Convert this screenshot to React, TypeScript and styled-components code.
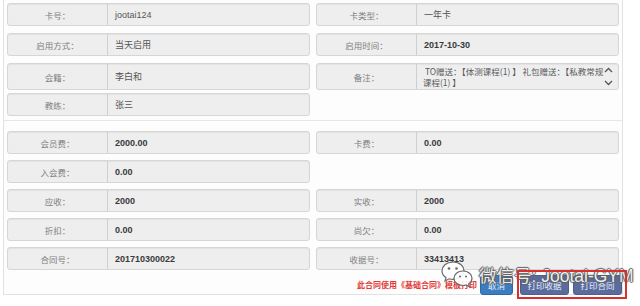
import styled, { createGlobalStyle } from 'styled-components';

const GlobalStyle = createGlobalStyle`
  html, body {
    margin: 0;
    padding: 0;
    background: #ffffff;
  }
  body {
    font-family: 'Liberation Sans', 'Noto Sans CJK SC', sans-serif;
    font-size: 9px;
  }
`;

const Page = styled.div`
  position: relative;
  width: 640px;
  height: 306px;
  padding-left: 3px;
  box-sizing: border-box;
  overflow: hidden;
`;

const Panel = styled.div`
  width: 620px;
  box-sizing: border-box;
  border: 1px solid #e2e2e2;
  border-top: none;
  background: #fdfdfd;
`;

const Section = styled.div<{ $top: number }>`
  display: grid;
  grid-template-columns: 303px 303px;
  grid-auto-rows: 23px;
  column-gap: 6px;
  row-gap: 7px;
  padding: ${(p) => p.$top}px 3px 4px;
  & + & {
    border-top: 1px solid #e6e6e6;
    row-gap: 6px;
  }
`;

// the note row is taller than its track and hangs into the gap below it
const Field = styled.div<{ $tall?: boolean }>`
  display: flex;
  height: ${(p) => (p.$tall ? 27 : 23)}px;
  margin-bottom: ${(p) => (p.$tall ? -4 : 0)}px;
  box-sizing: border-box;
  border: 1px solid #d6d6d6;
  border-radius: 3px;
  background: #eeeeee;
  box-shadow: inset 0 1px 1px rgba(0, 0, 0, 0.05);
`;

const Label = styled.div`
  width: 99px;
  flex-shrink: 0;
  display: flex;
  align-items: center;
  justify-content: center;
  border-right: 1px solid #cfcfcf;
  color: #808080;
  font-family: 'Noto Sans CJK SC', sans-serif;
  font-size: 8.5px;
`;

const Value = styled.div<{ $bold?: boolean }>`
  flex: 1;
  display: flex;
  align-items: center;
  padding-left: 7px;
  color: ${(p) => (p.$bold ? '#3a3a3a' : '#555555')};
  font-weight: ${(p) => (p.$bold ? 700 : 400)};
  font-family: 'Liberation Sans', 'Noto Sans CJK SC', sans-serif;
  font-size: 9px;
`;

const NoteValue = styled.div`
  flex: 1;
  display: flex;
  padding: 2px 5px 0 6px;
  color: #5a5a5a;
  font-family: 'Noto Sans CJK SC', sans-serif;
  font-size: 8.5px;
  line-height: 11px;
`;

const NoteText = styled.div`
  flex: 1;
  white-space: pre;
`;

const Arrows = styled.div`
  display: flex;
  flex-direction: column;
  justify-content: space-between;
  padding: 1px 0 3px;
`;

const Footer = styled.div`
  display: flex;
  align-items: flex-end;
  justify-content: flex-end;
  padding: 1px 0 0;
  margin-bottom: -1px;
`;

const Notice = styled.span`
  margin-right: 3px;
  margin-bottom: 5px;
  color: #e23a35;
  font-family: 'Noto Sans CJK SC', sans-serif;
  font-weight: 700;
  font-size: 8px;
`;

const Button = styled.button<{ $kind: 'primary' | 'print' }>`
  height: 20px;
  width: ${(p) => (p.$kind === 'primary' ? 33 : 49)}px;
  margin-left: ${(p) => (p.$kind === 'primary' ? 0 : 4)}px;
  padding: 0;
  border: 1px solid ${(p) => (p.$kind === 'primary' ? '#2d6aa8' : '#4d5e8d')};
  border-radius: 3px;
  background: ${(p) => (p.$kind === 'primary' ? '#3b7dc0' : '#5a6c9d')};
  color: #e8eef6;
  font-family: 'Noto Sans CJK SC', sans-serif;
  font-size: 8.5px;
  &:first-of-type {
    margin-right: 3px;
  }
`;

const Highlight = styled.div`
  position: absolute;
  left: 517px;
  top: 270px;
  width: 110px;
  height: 29px;
  box-sizing: border-box;
  border: 2px solid #d8302c;
`;

const Watermark = styled.div`
  position: absolute;
  left: 440px;
  top: 259px;
  display: flex;
  align-items: center;
  gap: 3px;
  pointer-events: none;
`;

const WatermarkText = styled.span`
  color: rgba(255, 255, 255, 0.92);
  font-family: 'Liberation Sans', 'Noto Sans CJK SC', sans-serif;
  font-size: 17.5px;
  text-shadow: 0 0 1px #4a4a4a, 1px 0 1px #666, -1px 0 1px #666, 0 1px 1px #666, 0 -1px 1px #666;
  white-space: nowrap;
`;

type Cell = { label: string; value?: string; bold?: boolean } | null;

const topRows: Cell[][] = [
  [
    { label: '卡号：', value: 'jootai124' },
    { label: '卡类型：', value: '一年卡' },
  ],
  [
    { label: '启用方式：', value: '当天启用' },
    { label: '启用时间：', value: '2017-10-30', bold: true },
  ],
];

const bottomRows: Cell[][] = [
  [
    { label: '会员费：', value: '2000.00', bold: true },
    { label: '卡费：', value: '0.00', bold: true },
  ],
  [{ label: '入会费：', value: '0.00', bold: true }, null],
  [
    { label: '应收：', value: '2000', bold: true },
    { label: '实收：', value: '2000', bold: true },
  ],
  [
    { label: '折扣：', value: '0.00', bold: true },
    { label: '尚欠：', value: '0.00', bold: true },
  ],
  [
    { label: '合同号：', value: '201710300022', bold: true },
    { label: '收据号：', value: '33413413', bold: true },
  ],
];

const renderCell = (cell: Cell, key: string) =>
  cell ? (
    <Field key={key}>
      <Label>{cell.label}</Label>
      <Value $bold={cell.bold}>{cell.value}</Value>
    </Field>
  ) : (
    <div key={key} />
  );

const Chevron = ({ up }: { up?: boolean }) => (
  <svg width='9' height='6' viewBox='0 0 9 6'>
    <path
      d={up ? 'M1 5 L4.5 1.5 L8 5' : 'M1 1 L4.5 4.5 L8 1'}
      fill='none'
      stroke='#555'
      strokeWidth='1.3'
    />
  </svg>
);

const WeChatLogo = () => (
  <svg width='36' height='30' viewBox='0 0 36 30'>
    <g fill='rgba(255,255,255,0.9)' stroke='#6a6a6a' strokeWidth='1.2'>
      <path d='M13 3 C6 3 2 7.5 2 12 C2 14.8 3.5 17 6 18.6 L5 22 L9 19.8 C10.3 20.2 11.6 20.4 13 20.4 C20 20.4 24 16.3 24 11.8 C24 7.3 20 3 13 3 Z' />
      <path d='M23 12 C17.5 12 14 15.5 14 19.3 C14 23 17.5 26.5 23 26.5 C24 26.5 25 26.3 26 26 L29.5 27.8 L28.6 24.9 C30.8 23.5 32 21.5 32 19.3 C32 15.5 28.5 12 23 12 Z' />
    </g>
    <g fill='#6a6a6a'>
      <circle cx='9' cy='9.5' r='1.3' />
      <circle cx='16.5' cy='9.5' r='1.3' />
      <circle cx='20' cy='17.5' r='1' />
      <circle cx='26' cy='17.5' r='1' />
    </g>
  </svg>
);

export default function App() {
  return (
    <>
      <GlobalStyle />
      <Page>
        <Panel>
          <Section $top={3}>
            {topRows.map((row, i) => row.map((cell, j) => renderCell(cell, `t${i}${j}`)))}
            <Field $tall>
              <Label>会籍：</Label>
              <Value>李白和</Value>
            </Field>
            <Field $tall>
              <Label>备注：</Label>
              <NoteValue>
                <NoteText>{' TO赠送：【体测课程(1) 】 礼包赠送：【私教常规\n课程(1) 】'}</NoteText>
                <Arrows>
                  <Chevron up />
                  <Chevron />
                </Arrows>
              </NoteValue>
            </Field>
            <Field>
              <Label>教练：</Label>
              <Value>张三</Value>
            </Field>
            <div />
          </Section>
          <Section $top={10}>
            {bottomRows.map((row, i) => row.map((cell, j) => renderCell(cell, `b${i}${j}`)))}
          </Section>
          <Footer>
            <Notice>此合同使用《基础合同》模板打印</Notice>
            <Button $kind='primary'>取消</Button>
            <Button $kind='print'>打印收据</Button>
            <Button $kind='print'>打印合同</Button>
          </Footer>
        </Panel>
        <Watermark>
          <WeChatLogo />
          <WatermarkText>微信号: Jootai-GYM</WatermarkText>
        </Watermark>
        <Highlight />
      </Page>
    </>
  );
}
